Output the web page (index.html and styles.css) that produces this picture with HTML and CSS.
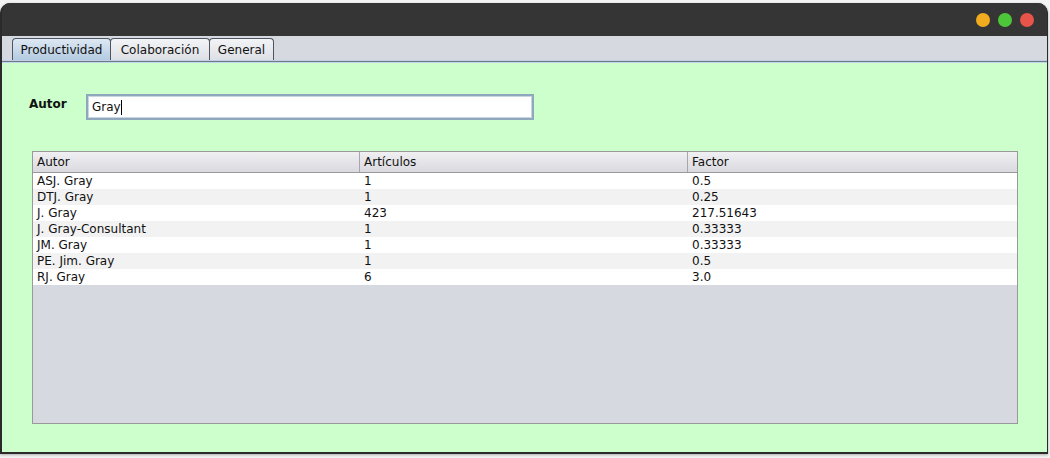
FILE: index.html
```html
<!DOCTYPE html>
<html lang="es">
<head>
<meta charset="utf-8">
<title>Productividad</title>
<link rel="stylesheet" href="styles.css">
</head>
<body>
<div class="window">
  <div class="titlebar">
    <span class="light yellow"></span>
    <span class="light green"></span>
    <span class="light red"></span>
  </div>
  <div class="tabbar">
    <div class="tab selected w1">Productividad</div>
    <div class="tab w1">Colaboración</div>
    <div class="tab w2">General</div>
  </div>
  <div class="content">
    <div class="search">
      <label class="label">Autor</label>
      <div class="input"><span>Gray</span><span class="caret"></span></div>
    </div>
    <div class="table">
      <div class="row head">
        <div class="cell">Autor</div>
        <div class="cell">Artículos</div>
        <div class="cell">Factor</div>
      </div>
      <div class="row"><div class="cell">ASJ. Gray</div><div class="cell">1</div><div class="cell">0.5</div></div>
      <div class="row alt"><div class="cell">DTJ. Gray</div><div class="cell">1</div><div class="cell">0.25</div></div>
      <div class="row"><div class="cell">J. Gray</div><div class="cell">423</div><div class="cell">217.51643</div></div>
      <div class="row alt"><div class="cell">J. Gray-Consultant</div><div class="cell">1</div><div class="cell">0.33333</div></div>
      <div class="row"><div class="cell">JM. Gray</div><div class="cell">1</div><div class="cell">0.33333</div></div>
      <div class="row alt"><div class="cell">PE. Jim. Gray</div><div class="cell">1</div><div class="cell">0.5</div></div>
      <div class="row"><div class="cell">RJ. Gray</div><div class="cell">6</div><div class="cell">3.0</div></div>
      <div class="empty"></div>
    </div>
  </div>
</div>
</body>
</html>
```
FILE: styles.css
```css
html, body {
  margin: 0;
  padding: 0;
}
body {
  background: #f4f4f4;
  font-family: "DejaVu Sans", sans-serif;
  font-size: 12px;
  color: #111;
  width: 1050px;
  height: 458px;
  overflow: hidden;
}
.window {
  margin-top: 3px;
  width: 1048px;
  height: 451px;
  box-sizing: border-box;
  border-radius: 10px 10px 0 0;
  background: #353535;
  border: 1px solid #2a2a2a;
  border-left: 2px solid #2a2a2a;
  border-top: none;
  border-bottom: 2px solid #2b2b2b;
  display: flex;
  flex-direction: column;
  overflow: hidden;
  box-shadow: 0 1px 3px rgba(0,0,0,0.3);
}
.titlebar {
  height: 33px;
  flex: none;
  display: flex;
  justify-content: flex-end;
  align-items: center;
  gap: 8px;
  padding-right: 13px;
  box-sizing: border-box;
  background: #353535;
}
.light {
  width: 14px;
  height: 14px;
  border-radius: 50%;
  display: block;
}
.yellow { background: #f1ac1f; }
.green { background: #4ec63a; }
.red { background: #e8534a; }
.tabbar {
  height: 26px;
  flex: none;
  background: #d6d9e0;
  display: flex;
  align-items: flex-end;
  padding-left: 10px;
  box-sizing: border-box;
  border-bottom: 2px solid #bfd0e4;
  position: relative;
}
.tabbar::after {
  content: "";
  position: absolute;
  left: 0;
  right: 0;
  bottom: -2px;
  height: 1px;
  background: #6e7a8a;
}
.tab {
  height: 22px;
  box-sizing: border-box;
  border: 1px solid #4e5560;
  border-bottom: none;
  border-radius: 4px 4px 0 0;
  padding-top: 3px;
  margin-right: -1px;
  background: linear-gradient(#f3f4f6, #dcdfe5);
  font-size: 12px;
  color: #111;
  line-height: 17px;
  text-align: center;
  position: relative;
  z-index: 1;
}
.w1 { width: 100px; }
.w2 { width: 65px; }
.tab.selected {
  width: 99px;
  background: linear-gradient(#dde8f3, #b4cbe2);
}
.content {
  flex: 1;
  background: #ccffcc;
  padding-top: 31px;
  padding-left: 30px;
  padding-right: 30px;
  border-top: 1px solid #c3d4e6;
}
.search {
  display: flex;
  align-items: flex-start;
}
.label {
  font-weight: bold;
  width: 57px;
  padding-top: 3px;
  margin-left: -3px;
  font-size: 12px;
  line-height: 14px;
}
.input {
  width: 448px;
  height: 26px;
  box-sizing: border-box;
  background: #fff;
  border: 2px solid #8fa8bd;
  box-shadow: inset 0 0 0 1px #c8d6e2;
  padding-left: 4px;
  display: flex;
  align-items: center;
  font-size: 12px;
}
.caret {
  display: inline-block;
  width: 1px;
  height: 15px;
  background: #000;
}
.table {
  margin-top: 31px;
  width: 986px;
  height: 273px;
  box-sizing: border-box;
  border: 1px solid #999;
  background: #d6d9e0;
  display: flex;
  flex-direction: column;
}
.row {
  display: grid;
  grid-template-columns: 327px 328px 1fr;
  height: 16px;
  background: #fff;
  line-height: 17px;
  flex: none;
}
.row.alt {
  background: #f2f2f2;
}
.row.head {
  height: 20px;
  line-height: 20px;
  background: linear-gradient(#f0f0f3, #d9d9df);
  border-bottom: 1px solid #999;
  box-sizing: content-box;
}
.cell {
  padding-left: 4px;
  white-space: nowrap;
  overflow: hidden;
}
.head .cell {
  border-right: 1px solid #a6a6ad;
}
.head .cell:last-child {
  border-right: none;
}
.empty {
  flex: 1;
}
```
